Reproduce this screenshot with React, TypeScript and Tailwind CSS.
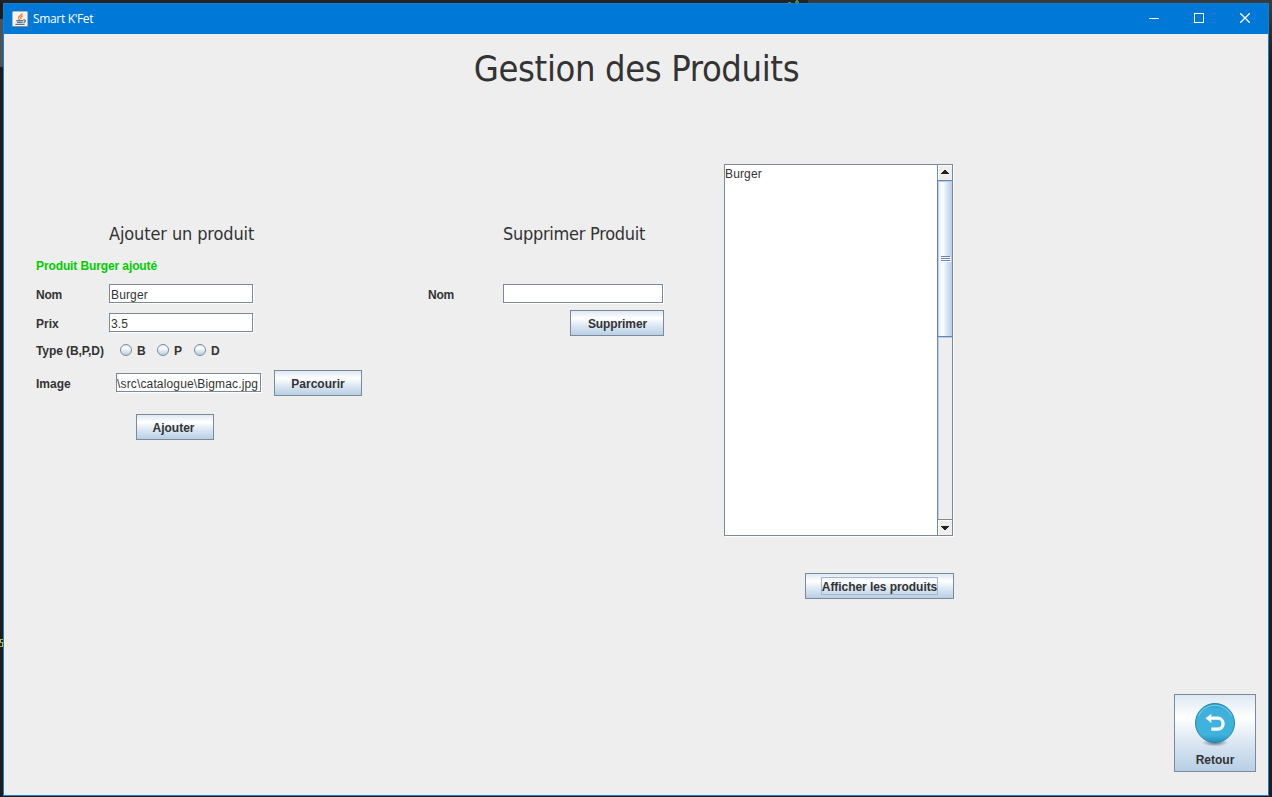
import type { ReactNode } from "react";

const OCEAN = "bg-[linear-gradient(to_bottom,#dde8f3_0%,#ffffff_30%,#dde8f3_60%,#b8cfe5_100%)]";

function Button({ children, className = "" }: { children: ReactNode; className?: string }) {
  return (
    <button className={`flex h-[26px] shrink-0 items-center justify-center border border-[#7a8a99] font-bold ${OCEAN} ${className}`}>
      {children}
    </button>
  );
}

function Field({ value, className = "" }: { value: string; className?: string }) {
  return (
    <div className={`flex h-[19px] shrink-0 items-center overflow-hidden border border-[#7a8a99] bg-white pt-[2px] tracking-[0.15px] whitespace-nowrap shadow-[1px_1px_0_#fff] ${className}`}>
      {value}
    </div>
  );
}

function Radio({ label }: { label: string }) {
  return (
    <label className="flex w-[37px] items-center gap-[5px] font-bold">
      <span className={`-mt-px size-3 rounded-full border border-[#7a8a99] ${OCEAN}`} />
      {label}
    </label>
  );
}

function JavaIcon() {
  return (
    <svg width="16" height="16" viewBox="0 0 16 16" className="-mt-px shrink-0">
      <rect x="0.5" y="0.5" width="15" height="15" rx="1" fill="#f3f3f1" stroke="#b9b3a9" />
      <path d="M0.5 15.5h15" stroke="#8d8880" />
      <path d="M10.4 2.6C9.5 4.7 6 5 6.500 7c.2.900 1 1.100.8 2M10.800 4.900C8.700 5.800 8.200 6.700 9.200 8.200" fill="none" stroke="#ee8434" strokeWidth="1.300" />
      <path d="M4.200 9.600h6.800M5 11.400h5.600M3.400 13.400h9.200" stroke="#54758f" strokeWidth="1.200" />
      <path d="M11.200 9.100c2.700-.7 3 1.700.3 2.500" fill="none" stroke="#54758f" strokeWidth="1.200" />
    </svg>
  );
}

function TitleBar() {
  return (
    <header className="flex h-[30px] shrink-0 items-center bg-[#0078d7] pl-2 font-['Open_Sans','Noto_Sans',sans-serif] text-[12px] text-white">
      <JavaIcon />
      <span className="ml-[5px] tracking-[-0.33px]">Smart K'Fet</span>
      <svg width="101" height="10" viewBox="0 0 101 10" className="mr-[18px] mb-[2px] ml-auto" fill="none" stroke="#fff">
        <path d="M0 5.5h10" shapeRendering="crispEdges" />
        <rect x="45.5" y="0.5" width="9" height="9" shapeRendering="crispEdges" />
        <path d="M91.2 0.2l9.6 9.6M100.8 0.2l-9.6 9.6" strokeWidth="1.3" />
      </svg>
    </header>
  );
}

function AddProduct() {
  return (
    <section className="w-[326px] shrink-0 pt-[58px]">
      <h2 className="ml-[73px] h-6 font-['DejaVu_Sans_Condensed','DejaVu_Sans',sans-serif] text-[18px] leading-6 tracking-[-0.12px] whitespace-nowrap [font-stretch:condensed]">Ajouter un produit</h2>
      <p className="mt-3 h-4 leading-4 font-bold tracking-[-0.11px] text-[#00cc00]">Produit Burger ajouté</p>
      <div className="mt-[10px] flex h-[19px] items-center">
        <b className="w-[73px] pt-[2px] tracking-[-0.2px]">Nom</b>
        <Field value="Burger" className="w-[144px] pl-px" />
      </div>
      <div className="mt-[10px] flex h-[19px] items-center">
        <b className="w-[73px] pt-[2px]">Prix</b>
        <Field value="3.5" className="w-[144px] pl-px" />
      </div>
      <div className="mt-[9px] flex h-[19px] items-center">
        <b className="w-[84px] tracking-[-0.09px]">Type (B,P,D)</b>
        <Radio label="B" />
        <Radio label="P" />
        <Radio label="D" />
      </div>
      <div className="mt-[10px] flex h-[26px] items-center">
        <b className="w-[80px] pt-[2px]">Image</b>
        <Field value="\src\catalogue\Bigmac.jpg" className="mb-px w-[145px]" />
        <Button className="ml-[13px] w-[88px] pt-[2px]">Parcourir</Button>
      </div>
      <Button className="mt-[18px] ml-[100px] w-[78px] pt-[2px] pr-[3px]">Ajouter</Button>
    </section>
  );
}

function RemoveProduct() {
  return (
    <section className="ml-[66px] w-[236px] shrink-0 pt-[58px]">
      <h2 className="ml-[75px] h-6 font-['DejaVu_Sans_Condensed','DejaVu_Sans',sans-serif] text-[18px] leading-6 tracking-[-0.28px] whitespace-nowrap [font-stretch:condensed]">Supprimer Produit</h2>
      <div className="mt-[38px] flex h-[19px] items-center">
        <b className="w-[75px] pt-[2px] tracking-[-0.2px]">Nom</b>
        <Field value="" className="w-[160px]" />
      </div>
      <Button className="mt-[7px] ml-[142px] w-[94px] pt-[2px] pl-px tracking-[-0.1px]">Supprimer</Button>
    </section>
  );
}

function ProductList() {
  return (
    <section className="ml-[60px] flex w-[230px] shrink-0 flex-col">
      <div className="flex h-[372px] w-[229px] border border-[#7a8a99] bg-white shadow-[1px_1px_0_#fff]">
        <div className="grow pt-[2px] leading-[15px] tracking-[0.15px]">Burger</div>
        <div className="flex w-[15px] flex-col border-l border-[#7a8a99] bg-[#eeeeee]">
          <div className="flex h-[15px] shrink-0 items-start border-t border-l border-white pt-1 pl-[2px]">
            <svg width="8" height="4" viewBox="0 0 8 4" shapeRendering="crispEdges">
              <path d="M3 0h2v1h1v1h1v1h1v1H0V3h1V2h1V1h1z" fill="#222" />
            </svg>
          </div>
          <div className="-ml-px flex h-[157px] shrink-0 items-center justify-center border-y border-l border-[#6382bf] bg-[linear-gradient(to_right,#dde8f3_0%,#ffffff_30%,#dde8f3_60%,#b8cfe5_100%)] shadow-[inset_1px_1px_0_#b8cfe5]">
            <svg width="10" height="6" viewBox="0 0 10 6" className="ml-px" shapeRendering="crispEdges">
              <path d="M1 1.5h9M1 3.5h9M1 5.5h9" stroke="#fff" />
              <path d="M0 .5h9M0 2.5h9M0 4.5h9" stroke="#6382bf" />
            </svg>
          </div>
          <div className="grow border-t border-l border-[#b8cfe5]" />
          <div className="flex h-4 shrink-0 items-start border-t border-[#7a8a99] pt-[6px] pl-[3px] shadow-[inset_1px_1px_0_#fff]">
            <svg width="8" height="4" viewBox="0 0 8 4" shapeRendering="crispEdges">
              <path d="M0 0h8v1H7v1H6v1H5v1H3V3H2V2H1V1H0z" fill="#222" />
            </svg>
          </div>
        </div>
      </div>
      <Button className="mt-[37px] w-[149px] self-end">
        <span className="flex h-[18px] w-[117px] items-center justify-center border border-[#a3b8cc] pt-[2px] tracking-[-0.06px] whitespace-nowrap">Afficher les produits</span>
      </Button>
    </section>
  );
}

function BackIcon() {
  return (
    <svg width="44" height="48" viewBox="0 0 44 48">
      <defs>
        <radialGradient id="shade">
          <stop offset="0" stopColor="#34444f" stopOpacity="0.75" />
          <stop offset="1" stopColor="#34444f" stopOpacity="0" />
        </radialGradient>
        <linearGradient id="disc" x1="0" y1="0" x2="0" y2="1">
          <stop offset="0" stopColor="#2a9cc4" />
          <stop offset="0.15" stopColor="#3eb0dc" />
          <stop offset="0.8" stopColor="#3fb3dd" />
          <stop offset="1" stopColor="#258fb9" />
        </linearGradient>
      </defs>
      <ellipse cx="22" cy="41.5" rx="13" ry="4" fill="url(#shade)" />
      <circle cx="22" cy="22" r="19.5" fill="url(#disc)" stroke="#2389b0" />
      <path d="M5.5 15A18 18 0 0 1 38.5 15" fill="none" stroke="#7dcce9" />
      <path d="M16 17.2H24.8A5.300 5.450 0 0 1 24.800 28.100H18.300" fill="none" stroke="#fff" strokeWidth="3.300" />
      <path d="M12.500 17.200L18.300 12.700V21.900Z" fill="#fff" />
    </svg>
  );
}

export default function App() {
  return (
    <div className="flex h-[797px] w-[1272px] flex-col overflow-hidden bg-[#1c1c1c] font-['Liberation_Sans',Arial,sans-serif] text-[12px] leading-[14px] text-[#333333]">
      <div className="flex h-[3px] shrink-0 bg-[#222222]">
        <svg width="12" height="3" viewBox="0 0 12 3" className="ml-[788px]" shapeRendering="crispEdges">
          <path d="M0 2h3v1H0zM8 0h2v1h1v2H7V1h1z" fill="#4c8a3c" />
        </svg>
        <div className="ml-2 grow bg-[#383b3d]" />
      </div>
      <div className="flex grow">
        <div className="flex w-[3px] shrink-0 flex-col pt-4">
          <div className="h-12 bg-[#4a5358]" />
          <svg width="3" height="8" viewBox="0 0 3 8" className="mt-[572px]" shapeRendering="crispEdges">
            <path d="M0 .5h3M0 3.5h3M0 7.5h3M.5 1v2M2.5 4v3" stroke="#b5b534" />
          </svg>
        </div>
        <main className="flex h-[793px] w-[1266px] shrink-0 flex-col border border-[#1580d2] bg-[#eeeeee]">
          <TitleBar />
          <div className="flex grow flex-col">
            <h1 className="mt-[11px] h-12 pl-px text-center font-['DejaVu_Sans_Condensed','DejaVu_Sans',sans-serif] text-[36px] leading-[48px] tracking-[-0.37px] [font-stretch:condensed]">Gestion des Produits</h1>
            <div className="mt-[71px] flex h-[435px] pl-8">
              <AddProduct />
              <RemoveProduct />
              <ProductList />
            </div>
            <button className={`mt-[95px] mr-3 flex h-[78px] w-[82px] flex-col items-center self-end border border-[#7a8a99] pt-[6px] font-bold ${OCEAN}`}>
              <BackIcon />
              <span className="mt-[4px]">Retour</span>
            </button>
          </div>
        </main>
        <div className="grow bg-[linear-gradient(to_bottom,#3a3d3f_0px,#1c1c1c_60px)]" />
      </div>
    </div>
  );
}
